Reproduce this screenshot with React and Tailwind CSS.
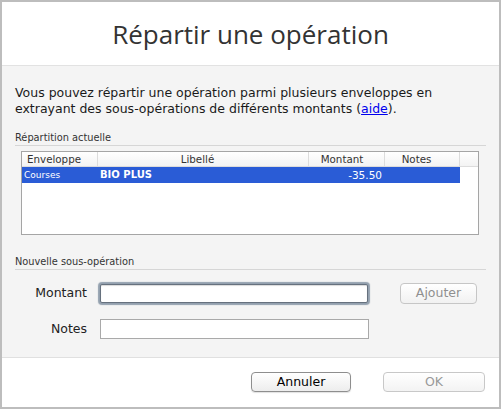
export default function App() {
  return (
    <div className="w-[501px] h-[409px] border-2 border-[#bdbdbd] flex flex-col bg-white font-['DejaVu_Sans',sans-serif] text-[#1a1a1a] overflow-hidden">
      <div className="h-[64px] shrink-0 border-b border-[#e2e2e2] flex items-center justify-center bg-white">
        <h1 className="font-['Open_Sans',sans-serif] text-[26px] leading-none text-[#333]">Répartir une opération</h1>
      </div>
      <div className="h-[291px] shrink-0 bg-[#f4f4f4] px-[13px] pt-[19px]">
        <p className="text-[12.5px] leading-[16px] whitespace-nowrap">
          Vous pouvez répartir une opération parmi plusieurs enveloppes en
          <br />
          extrayant des sous-opérations de différents montants (
          <a className="text-[#0000ee] underline">aide</a>).
        </p>
        <div className="mt-[15px] h-[14px] border-b border-[#d6d6d6] text-[9.8px] leading-[12px] text-[#333]">Répartition actuelle</div>
        <div className="mt-[5px] ml-[6px] w-[458px] h-[84px] border border-[#a5a5a5] bg-white">
          <div className="grid grid-cols-[76px_211px_76px_75px_1fr] h-[15px] border-b border-[#dcdcdc] bg-gradient-to-b from-white to-[#f3f3f3] text-[10.3px] leading-[14px] text-[#333]">
            <div className="border-r border-[#dcdcdc] pl-[5px]">Enveloppe</div>
            <div className="border-r border-[#dcdcdc] text-center pr-[11px]">Libellé</div>
            <div className="border-r border-[#dcdcdc] text-center pr-[9px]">Montant</div>
            <div className="border-r border-[#dcdcdc] text-center pr-[11px]">Notes</div>
            <div></div>
          </div>
          <div className="grid grid-cols-[76px_211px_76px_75px] w-[438px] h-[16px] bg-[#2a5cd6] text-white items-center">
            <div className="text-[9px] leading-[16px] pl-[2px]">Courses</div>
            <div className="text-[10px] leading-[16px] font-bold pl-[2px]">BIO PLUS</div>
            <div className="text-[10.5px] leading-[16px] text-right pr-[3px]">-35.50</div>
            <div></div>
          </div>
        </div>
        <div className="mt-[21px] h-[14px] border-b border-[#d6d6d6] text-[9.8px] leading-[12px] text-[#333]">Nouvelle sous-opération</div>
        <div className="mt-[13px] h-[21px] flex items-center">
          <div className="w-[72px] text-right text-[12.5px] text-[#222]">Montant</div>
          <div className="ml-[13px] w-[268px] h-[19px] bg-white border border-[#66717e] rounded-[2px] shadow-[0_0_1px_2px_#93a0ae,inset_0_1px_1px_rgba(0,0,0,0.15)]"></div>
          <button className="ml-[32px] w-[77px] h-[21px] rounded-[4px] border border-[#c6c6c6] bg-gradient-to-b from-white to-[#f1f1f1] text-[12.5px] text-[#8f8f8f] leading-none">Ajouter</button>
        </div>
        <div className="mt-[15px] h-[20px] flex items-center">
          <div className="w-[72px] text-right text-[12.5px] text-[#222]">Notes</div>
          <div className="ml-[13px] w-[269px] h-[20px] bg-white border border-[#a9a9a9]"></div>
        </div>
      </div>
      <div className="flex-1 border-t border-[#e0e0e0] bg-white flex justify-end items-start pt-[14px] pr-[14px] gap-[32px]">
        <button className="w-[100px] h-[20px] rounded-[4px] border border-[#8e8e8e] bg-gradient-to-b from-white to-[#ededed] shadow-[0_1px_1px_rgba(0,0,0,0.12)] text-[12.5px] text-black leading-none">Annuler</button>
        <button className="w-[102px] h-[20px] rounded-[4px] border border-[#c8c8c8] bg-gradient-to-b from-white to-[#f3f3f3] text-[12.5px] text-[#999] leading-none">OK</button>
      </div>
    </div>
  );
}
